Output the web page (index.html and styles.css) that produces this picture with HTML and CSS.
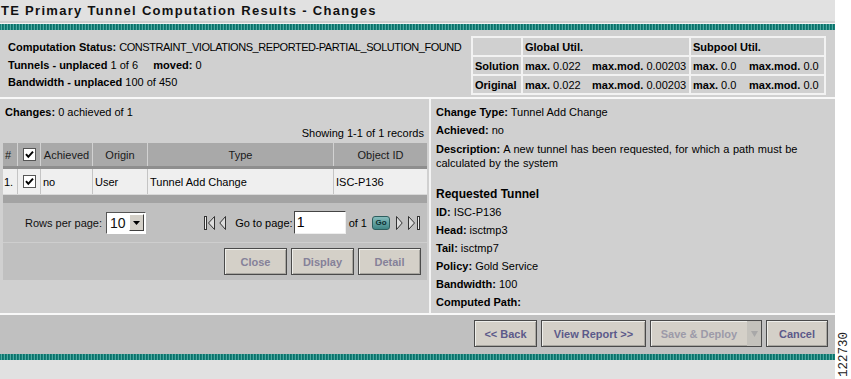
FILE: index.html
```html
<!DOCTYPE html>
<html>
<head>
<meta charset="utf-8">
<link rel="stylesheet" href="styles.css">
</head>
<body>
<div class="page">
  <div class="titlebar"><h1 class="title">TE Primary Tunnel Computation Results - Changes</h1></div>
  <div class="stripe"></div>
  <div class="status">
    <div class="status-text">
      <div class="line"><b>Computation Status:</b> <span class="caps">CONSTRAINT_VIOLATIONS_REPORTED-PARTIAL_SOLUTION_FOUND</span></div>
      <div class="line"><b>Tunnels - unplaced</b> 1 of 6 &nbsp;&nbsp;&nbsp; <b>moved:</b> 0</div>
      <div class="line"><b>Bandwidth - unplaced</b> 100 of 450</div>
    </div>
    <table class="util">
      <colgroup><col class="w0"><col class="w1"><col class="w2"><col class="w3"><col class="w4"></colgroup>
      <tr><th></th><th colspan="2">Global Util.</th><th colspan="2">Subpool Util.</th></tr>
      <tr><th>Solution</th><td class="g1"><b>max.</b> 0.022</td><td class="g2"><b>max.mod.</b> 0.00203</td><td class="s1"><b>max.</b> 0.0</td><td class="s2"><b>max.mod.</b> 0.0</td></tr>
      <tr><th>Original</th><td class="g1"><b>max.</b> 0.022</td><td class="g2"><b>max.mod.</b> 0.00203</td><td class="s1"><b>max.</b> 0.0</td><td class="s2"><b>max.mod.</b> 0.0</td></tr>
    </table>
  </div>
  <div class="main">
    <div class="left">
      <div class="changes"><b>Changes:</b> 0 achieved of 1</div>
      <div class="showing">Showing 1-1 of 1 records</div>
      <div class="grid">
        <div class="ghead">
          <div class="col cnum">#</div>
          <div class="col cchk"><svg class="chk" viewBox="0 0 13 13" width="13" height="13"><rect x="0.5" y="0.5" width="12" height="12" fill="#fff" stroke="#555"/><path d="M3 6.2 L5.3 8.8 L10 3.6" fill="none" stroke="#000" stroke-width="2"/></svg></div>
          <div class="col cach">Achieved</div>
          <div class="col corg">Origin</div>
          <div class="col ctype">Type</div>
          <div class="col cobj">Object ID</div>
        </div>
        <div class="grow">
          <div class="col cnum">1.</div>
          <div class="col cchk"><svg class="chk" viewBox="0 0 13 13" width="13" height="13"><rect x="0.5" y="0.5" width="12" height="12" fill="#fff" stroke="#555"/><path d="M3 6.2 L5.3 8.8 L10 3.6" fill="none" stroke="#000" stroke-width="2"/></svg></div>
          <div class="col cach l">no</div>
          <div class="col corg l">User</div>
          <div class="col ctype l">Tunnel Add Change</div>
          <div class="col cobj l">ISC-P136</div>
        </div>
        <div class="gfoot"></div>
        <div class="pager">
          <div class="rpp">Rows per page:
            <span class="select"><span class="sval">10</span><span class="sbtn"><svg viewBox="0 0 7 4" width="7" height="4"><path d="M0 0H7L3.5 4Z" fill="#000"/></svg></span></span>
          </div>
          <div class="nav">
            <svg class="ico first" viewBox="0 0 11 16" width="11" height="16"><rect x="0.5" y="1.5" width="2" height="13" fill="#eee" stroke="#333" stroke-width="1"/><path d="M10.5 1.5 L4.5 8 L10.5 14.5 Z" fill="#ddd" stroke="#333" stroke-width="1"/></svg>
            <svg class="ico prev" viewBox="0 0 7 16" width="7" height="16"><path d="M6.5 1.5 L0.8 8 L6.5 14.5 Z" fill="#ddd" stroke="#333" stroke-width="1"/></svg>
            <span class="goto">Go to page:</span>
            <span class="pinput">1</span>
            <span class="of">of 1</span>
            <span class="gobtn">Go</span>
            <svg class="ico next" viewBox="0 0 7 16" width="7" height="16"><path d="M0.5 1.5 L6.2 8 L0.5 14.5 Z" fill="#ddd" stroke="#333" stroke-width="1"/></svg>
            <svg class="ico last" viewBox="0 0 13 16" width="13" height="16"><path d="M0.5 1.5 L6.5 8 L0.5 14.5 Z" fill="#ddd" stroke="#333" stroke-width="1"/><rect x="9.5" y="1.5" width="2" height="13" fill="#eee" stroke="#333" stroke-width="1"/></svg>
          </div>
        </div>
        <div class="actions">
          <span class="btn dis">Close</span>
          <span class="btn dis">Display</span>
          <span class="btn dis">Detail</span>
        </div>
      </div>
    </div>
    <div class="right">
      <div class="dl"><b>Change Type:</b> Tunnel Add Change</div>
      <div class="dl"><b>Achieved:</b> no</div>
      <div class="dl desc"><b>Description:</b> <span class="dtext">A new tunnel has been requested, for which a path must be calculated by the system</span></div>
      <div class="dl req"><b>Requested Tunnel</b></div>
      <div class="dl"><b>ID:</b> ISC-P136</div>
      <div class="dl"><b>Head:</b> isctmp3</div>
      <div class="dl"><b>Tail:</b> isctmp7</div>
      <div class="dl"><b>Policy:</b> Gold Service</div>
      <div class="dl"><b>Bandwidth:</b> 100</div>
      <div class="dl"><b>Computed Path:</b></div>
    </div>
  </div>
  <div class="footer">
    <span class="btn fb back">&lt;&lt; Back</span>
    <span class="btn fb view">View Report &gt;&gt;</span>
    <span class="btn fb save"><span class="stext">Save &amp; Deploy</span><span class="sarrow"><svg viewBox="0 0 7 6" width="7" height="6"><path d="M0 0H7L3.5 6Z" fill="#a8a8a8"/></svg></span></span>
    <span class="btn fb cancel">Cancel</span>
  </div>
  <div class="stripe"></div>
  <div class="bottom"></div>
</div>
<div class="figno">122730</div>
</body>
</html>
```

FILE: styles.css
```css
html, body {
  margin: 0;
  padding: 0;
  background: #fff;
}
body {
  font-family: "Liberation Sans", Arial, sans-serif;
  font-size: 11px;
  color: #000;
  position: relative;
  width: 851px;
  height: 379px;
  overflow: hidden;
}
.page {
  width: 835px;
  display: flex;
  flex-direction: column;
}
.titlebar {
  height: 20px;
  background: #e1e1e1;
  border-bottom: 1px solid #f4f4f4;
  box-shadow: inset 0 -2px 0 #cfcfcf;
  display: flex;
  align-items: center;
  padding-bottom: 3px;
}
.title {
  margin: 0 0 0 1px;
  font-size: 13px;
  font-weight: bold;
  letter-spacing: 1.3px;
  color: #111;
}
.stripe {
  height: 6px;
  background: repeating-linear-gradient(90deg, #138078 0 1px, #4fa9a1 1px 2px, #0e6f69 2px 3px);
}
.status {
  background: #d0d0d0;
  height: 67px;
  display: flex;
  border-bottom: 2px solid #f8f8f8;
}
.status-text {
  padding: 9px 0 0 8px;
  white-space: nowrap;
  flex-shrink: 0;
}
.status-text .line {
  height: 17.5px;
  line-height: 17.5px;
}
.caps { letter-spacing: -0.45px; }
.util {
  margin: 6px 9px 0 auto;
  border-collapse: collapse;
  table-layout: fixed;
  width: 353px;
  height: 57px;
  align-self: flex-start;
  flex-shrink: 0;
}
.util col.w0 { width: 50px; }
.util col.w1 { width: 68px; }
.util col.w2 { width: 100px; }
.util col.w3 { width: 57px; }
.util col.w4 { width: 78px; }
.util th, .util td {
  border: 2px solid #f2f2f2;
  padding: 0 1px 0 2px;
  height: 17px;
  text-align: left;
  white-space: nowrap;
  overflow: hidden;
  font-size: 11px;
}
.util td.g1, .util td.s1 { border-right: none; }
.util td.g2, .util td.s2 { border-left: none; }
.main {
  display: flex;
  height: 214px;
  background: #d0d0d0;
  border-bottom: 2px solid #f8f8f8;
}
.left {
  width: 429px;
  padding: 0 2px 0 3px;
  box-sizing: border-box;
}
.changes {
  padding: 7px 0 0 2px;
  height: 14px;
}
.showing {
  text-align: right;
  margin-top: 6px;
  height: 17px;
  line-height: 14px;
  padding-right: 3px;
}
.grid {
  background: #c0c0c0;
}
.ghead, .grow {
  display: flex;
}
.ghead {
  background: #a9a9a9;
  height: 23px;
  border-bottom: 3px solid #8e8e8e;
  color: #1a1a1a;
}
.grow {
  background: #efefef;
  height: 25px;
  border-bottom: 1px solid #d8d8d8;
}
.col {
  display: flex;
  align-items: center;
  justify-content: center;
  box-sizing: border-box;
  border-right: 1px solid #d2d2d2;
  white-space: nowrap;
}
.grow .col { border-right: 1px solid #c4c4c4; }
.col.l { justify-content: flex-start; padding-left: 2px; }
.cnum { width: 15px; justify-content: flex-start; padding-left: 2px; }
.cchk { width: 23px; }
.cach { width: 52px; }
.corg { width: 55px; }
.ctype { width: 186px; }
.cobj { flex: 1; border-right: none !important; }
.grow .cnum { padding-left: 1px; }
.gfoot {
  height: 8px;
  background: #a3a3a3;
}
.pager {
  display: flex;
  align-items: center;
  justify-content: space-between;
  height: 39px;
  border-bottom: 1px solid #cecece;
  padding: 0 6px 0 22px;
}
.rpp {
  display: flex;
  align-items: center;
  gap: 4px;
  font-size: 11px;
  color: #111;
}
.select {
  display: inline-flex;
  align-items: center;
  height: 22px;
  width: 40px;
  background: #fff;
  border: 1px solid #555;
  border-right-color: #fff;
  border-bottom-color: #fff;
  box-sizing: border-box;
  padding: 1px;
}
.sval {
  flex: 1;
  font-size: 14px;
  padding-left: 2px;
}
.sbtn {
  width: 15px;
  height: 17px;
  background: #d4d0c8;
  border: 1px solid;
  border-color: #fff #404040 #404040 #fff;
  box-sizing: border-box;
  display: flex;
  align-items: center;
  justify-content: center;
}
.nav {
  display: flex;
  align-items: center;
}
.ico { display: block; }
.ico.first { margin-left: 2px; }
.ico.prev { margin-left: 4px; }
.goto { margin-left: 9px; }
.pinput {
  width: 52px;
  height: 23px;
  background: #fff;
  border: 1px solid #444;
  border-right-color: #eee;
  border-bottom-color: #eee;
  box-sizing: border-box;
  font-size: 14px;
  line-height: 21px;
  padding-left: 2px;
  margin-left: 1px;
}
.of { margin-left: 3px; }
.gobtn {
  margin: 0 6px 0 5px;
  width: 18px;
  height: 14px;
  border-radius: 3px;
  background: linear-gradient(#86bcbc, #3f8585);
  border: 1px solid #2d5e5e;
  box-sizing: border-box;
  color: #0c2f31;
  font-size: 8px;
  font-weight: bold;
  display: flex;
  align-items: center;
  justify-content: center;
}
.ico.last { margin-left: 5px; }
.actions {
  display: flex;
  justify-content: flex-end;
  gap: 4px;
  height: 37px;
  align-items: flex-start;
  padding: 5px 6px 0 0;
  box-sizing: border-box;
}
.btn {
  display: inline-flex;
  align-items: center;
  justify-content: center;
  background: #d4d0c8;
  border: 1px solid #4a4a4a;
  box-shadow: inset 1px 1px 0 #eeeeea, inset -1px -1px 0 #a8a6a0;
  height: 27px;
  box-sizing: border-box;
  font-weight: bold;
  font-size: 11px;
  color: #5c5a8a;
}
.btn.dis {
  color: #858199;
  width: 63px;
}
.right {
  flex: 1;
  border-left: 2px solid #f4f4f4;
  padding: 7px 0 0 5px;
}
.dl {
  line-height: 13px;
  margin-bottom: 5px;
}
.dl.desc { width: 380px; line-height: 14px; margin-bottom: 18px; }
.dtext { word-spacing: 0.45px; }
.dl.req { font-size: 12px; }
.footer {
  background: #c0c0c0;
  height: 39px;
  display: flex;
  justify-content: flex-end;
  align-items: flex-start;
  padding: 5px 7px 0 0;
  box-sizing: border-box;
  gap: 4px;
}
.fb.back { width: 63px; }
.fb.view { width: 105px; }
.fb.save { width: 112px; color: #9c9aa8; padding: 0; justify-content: space-between; }
.fb.save .stext { flex: 1; text-align: center; }
.fb.save .sarrow {
  width: 14px;
  height: 25px;
  background: #c4c2bc;
  display: flex;
  align-items: center;
  justify-content: center;
}
.fb.cancel { width: 62px; }
.bottom {
  height: 20px;
  background: #e1e1e1;
}
.figno {
  position: absolute;
  left: 838px;
  top: 377px;
  transform: rotate(-90deg);
  transform-origin: left top;
  font-family: "Liberation Mono", monospace;
  font-size: 12.5px;
  line-height: 12px;
  color: #222;
}
```
